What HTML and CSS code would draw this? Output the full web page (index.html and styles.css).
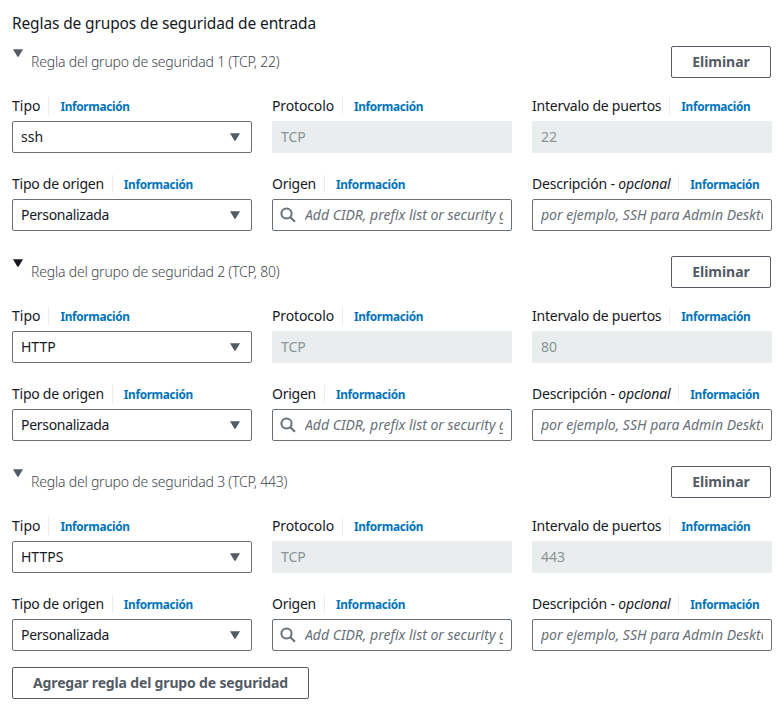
FILE: index.html
```
<!DOCTYPE html>
<html lang="es">
<head>
<meta charset="utf-8">
<title>Reglas de grupos de seguridad</title>
<link rel="stylesheet" href="styles.css">
</head>
<body>
<main class="panel">
<h1 class="title">Reglas de grupos de seguridad de entrada</h1>
<div id="rules"></div>
<button class="button add">Agregar regla del grupo de seguridad</button>
</main>
<script src="rules.js"></script>
</body>
</html>
```
FILE: rules.js
```
const rules = [
  { type: "ssh", port: "22" },
  { type: "HTTP", port: "80", active: true },
  { type: "HTTPS", port: "443" }
];

const caret = cls => `<svg class="caret ${cls}" viewBox="0 0 10 8"><path d="M0 .2H10L5.7 7.6Q5 8.3 4.3 7.6Z"/></svg>`;
const search = `<svg class="search" viewBox="0 0 16 16"><circle cx="6.5" cy="6.5" r="5.1"/><path d="M10.3 10.3 15 14.8"/></svg>`;

const field = (cls, label, control) => `
  <div class="field">
    <div class="label"><span class="${cls}">${label}</span><a class="info">Información</a></div>
    ${control}
  </div>`;
const select = (cls, value) => `<div class="control"><span class="value ${cls}">${value}</span>${caret("")}</div>`;
const disabled = value => `<div class="control disabled"><span class="value">${value}</span></div>`;

document.getElementById("rules").innerHTML = rules.map((r, i) => `
<section class="rule">
  <header class="head">
    ${caret(r.active ? "toggle active" : "toggle")}
    <h2 class="name">Regla del grupo de seguridad ${i + 1} (TCP, ${r.port})</h2>
    <button class="button">Eliminar</button>
  </header>
  <div class="fields">
    ${field("l-type", "Tipo", select("v-" + r.type.toLowerCase(), r.type))}
    ${field("l-protocol", "Protocolo", disabled("TCP"))}
    ${field("l-ports", "Intervalo de puertos", disabled(r.port))}
    ${field("l-source-type", "Tipo de origen", select("v-custom", "Personalizada"))}
    ${field("l-source", "Origen", `<div class="control">${search}<span class="hint h-cidr">Add CIDR, prefix list or security group</span></div>`)}
    ${field("l-desc", "Descripción - <em>opcional</em>", `<div class="control"><span class="hint h-desc">por ejemplo, SSH para Admin Desktop</span></div>`)}
  </div>
</section>`).join("");
```
FILE: styles.css
```
* { box-sizing: border-box; }
body {
  margin: 0;
  background: #fff;
  color: #16191f;
  font: 14px/22px "Noto Sans", "Open Sans", sans-serif;
}
.panel { width: 777px; padding: 12px 5px 10px 12px; }
.title { margin: 0 0 12px; font-size: 15.5px; line-height: 22px; font-weight: 400; letter-spacing: -.13px; }
.rule { margin-bottom: 25px; }
.rule:last-child { margin-bottom: 16px; }
.head { display: flex; align-items: flex-start; height: 32px; padding-right: 1px; }
.name { flex: 1; margin: 5px 0 0 8px; font-size: 14px; line-height: 22px; font-weight: 300; letter-spacing: -.2px; color: #3f464e; white-space: nowrap; }
.caret { flex: none; width: 10px; height: 8px; fill: #545b64; }
.toggle { margin: 3px 0 0 1px; }
.active { fill: #16191f; }
.button {
  height: 32px;
  padding: 0;
  width: 100px;
  border: 1px solid #545b64;
  border-radius: 2px;
  background: #fff;
  color: #545b64;
  font: 700 14px/20px "Noto Sans", "Open Sans", sans-serif;
  letter-spacing: -.05px;
  white-space: nowrap;
}
.add { display: block; width: 297px; letter-spacing: -.16px; }
.fields { display: grid; grid-template-columns: repeat(3, 240px); gap: 22px 20px; margin-top: 19px; }
.label { display: flex; align-items: center; height: 18px; margin-bottom: 6px; line-height: 18px; white-space: nowrap; }
.l-protocol { letter-spacing: -.14px; }
.l-ports { letter-spacing: -.24px; }
.l-source-type { letter-spacing: -.25px; }
.l-source { letter-spacing: -.25px; }
.l-desc { letter-spacing: -.18px; }
.v-custom { letter-spacing: -.3px; }
.info {
  height: 18px;
  margin-left: 8px;
  padding-left: 11px;
  border-left: 1px solid #eaeded;
  color: #0073bb;
  font-size: 11.8px;
  font-weight: 700;
  letter-spacing: -.33px;
  line-height: 19px;
}
.control {
  display: flex;
  align-items: center;
  height: 32px;
  padding: 0 8px;
  border: 1px solid #687078;
  border-radius: 2px;
  background: #fff;
}
.control .caret { margin-right: 3px; }
.value { flex: 1; }
.disabled { border-color: #eaeded; background: #eaeded; color: #879596; }
.search { flex: none; width: 16px; height: 16px; margin: 0 9px 0 -1px; fill: none; stroke: #687078; stroke-width: 2; }
.hint { flex: 1; min-width: 0; overflow: hidden; white-space: nowrap; font-style: italic; color: #687078; }
```
